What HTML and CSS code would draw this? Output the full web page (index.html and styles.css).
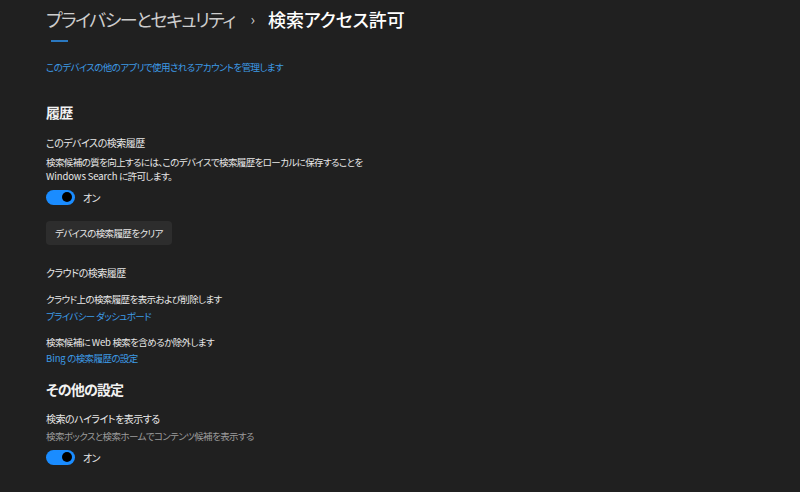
FILE: index.html
```html
<!DOCTYPE html>
<html lang="ja">
  <head>
    <meta charset="UTF-8" />
    <meta name="viewport" content="width=device-width, initial-scale=1.0" />
    <title>検索アクセス許可</title>
    <link rel="stylesheet" href="styles.css">
  </head>

  <body>
    <div class="page">
      <!-- breadcrumb -->
      <h1 class="crumb">
        <span class="crumb-parent">プライバシーとセキュリティ</span>
        <span class="crumb-sep">›</span>
        <span class="crumb-current">検索アクセス許可</span>
      </h1>
      <div class="crumb-line"></div>

      <a class="link top-link" href="#">このデバイスの他のアプリで使用されるアカウントを管理します</a>

      <!-- 履歴 -->
      <h2 class="section">履歴</h2>

      <div class="item-title mt-13">このデバイスの検索履歴</div>
      <p class="desc">検索候補の質を向上するには、このデバイスで検索履歴をローカルに保存することを<br><span class="latin">Windows Search</span> に許可します。</p>
      <div class="toggle-row mt-6">
        <span class="toggle"><span class="knob"></span></span>
        <span>オン</span>
      </div>
      <button class="btn">デバイスの検索履歴をクリア</button>

      <div class="item-title mt-20">クラウドの検索履歴</div>
      <div class="text mt-10">クラウド上の検索履歴を表示および削除します</div>
      <a class="link mt-1" href="#">プライバシー ダッシュボード</a>
      <div class="text mt-10">検索候補に <span class="latin">Web</span> 検索を含めるか除外します</div>
      <a class="link" href="#"><span class="latin">Bing</span> の検索履歴の設定</a>

      <!-- その他の設定 -->
      <h2 class="section mt-13">その他の設定</h2>
      <div class="item-title mt-12">検索のハイライトを表示する</div>
      <div class="sub mt-1">検索ボックスと検索ホームでコンテンツ候補を表示する</div>
      <div class="toggle-row mt-5">
        <span class="toggle"><span class="knob"></span></span>
        <span>オン</span>
      </div>
    </div>
  </body>
</html>
```

FILE: styles.css
```css
*,
*::after,
*::before {
  padding: 0;
  margin: 0;
  box-sizing: border-box;
}
:root {
  --bg: #202020;
  --text: #e8e8e8;
  --muted: #9c9c9c;
  --link: #3d9be6;
  --accent: #1a8cff;
}
html,
body {
  height: 100%;
  background: var(--bg);
}
body {
  font-family: "Noto Sans CJK JP", "Noto Sans", sans-serif;
  font-feature-settings: "palt";
  font-size: 9.5px;
  letter-spacing: -0.6px;
  color: var(--text);
  overflow: hidden;
}
.page {
  display: flex;
  flex-direction: column;
  align-items: flex-start;
  padding-left: 46px;
}

/* breadcrumb */
.crumb {
  display: flex;
  align-items: center;
  height: 38px;
  font-size: 18px;
  font-weight: 400;
  line-height: 38px;
}
.crumb-parent {
  color: #cdcdcd;
  letter-spacing: -1.5px;
}
.crumb-sep {
  color: #cdcdcd;
  font-size: 15px;
  letter-spacing: 0;
  margin: 0 13px 0 16px;
}
.crumb-current {
  color: #fff;
  font-weight: 500;
  letter-spacing: -0.1px;
}
.crumb-line {
  width: 17px;
  height: 2px;
  margin: 2px 0 0 5px;
  background: #2a78c0;
}

/* text */
.latin {
  letter-spacing: -0.1px;
}
.link {
  color: var(--link);
  text-decoration: none;
  line-height: 16px;
}
.top-link {
  margin-top: 17px;
}
.section {
  font-size: 14px;
  font-weight: 700;
  letter-spacing: -0.8px;
  line-height: 20px;
  color: #f2f2f2;
  margin-top: 27px;
}
.item-title {
  line-height: 16px;
  font-size: 10px;
  letter-spacing: -0.5px;
}
.text {
  line-height: 16px;
}
.desc {
  margin-top: 4px;
  line-height: 14px;
}
.sub {
  line-height: 16px;
  color: var(--muted);
}

/* toggle */
.toggle-row {
  display: flex;
  align-items: center;
  gap: 8px;
  height: 16px;
  font-size: 10px;
}
.toggle {
  display: flex;
  align-items: center;
  justify-content: flex-end;
  width: 29px;
  height: 15px;
  padding-right: 3px;
  border-radius: 8px;
  background: var(--accent);
}
.knob {
  width: 10px;
  height: 10px;
  border-radius: 50%;
  background: #000;
}

/* button */
.btn {
  margin-top: 16px;
  height: 24px;
  padding: 0 9px;
  border: none;
  border-radius: 4px;
  background: #2d2d2d;
  color: var(--text);
  font-family: inherit;
  font-feature-settings: "palt";
  font-size: 9.5px;
  letter-spacing: -0.6px;
}

.mt-1 { margin-top: 1px; }
.mt-5 { margin-top: 5px; }
.mt-6 { margin-top: 6px; }
.mt-10 { margin-top: 10px; }
.mt-12 { margin-top: 12px; }
.mt-13 { margin-top: 13px; }
.mt-20 { margin-top: 20px; }
```
